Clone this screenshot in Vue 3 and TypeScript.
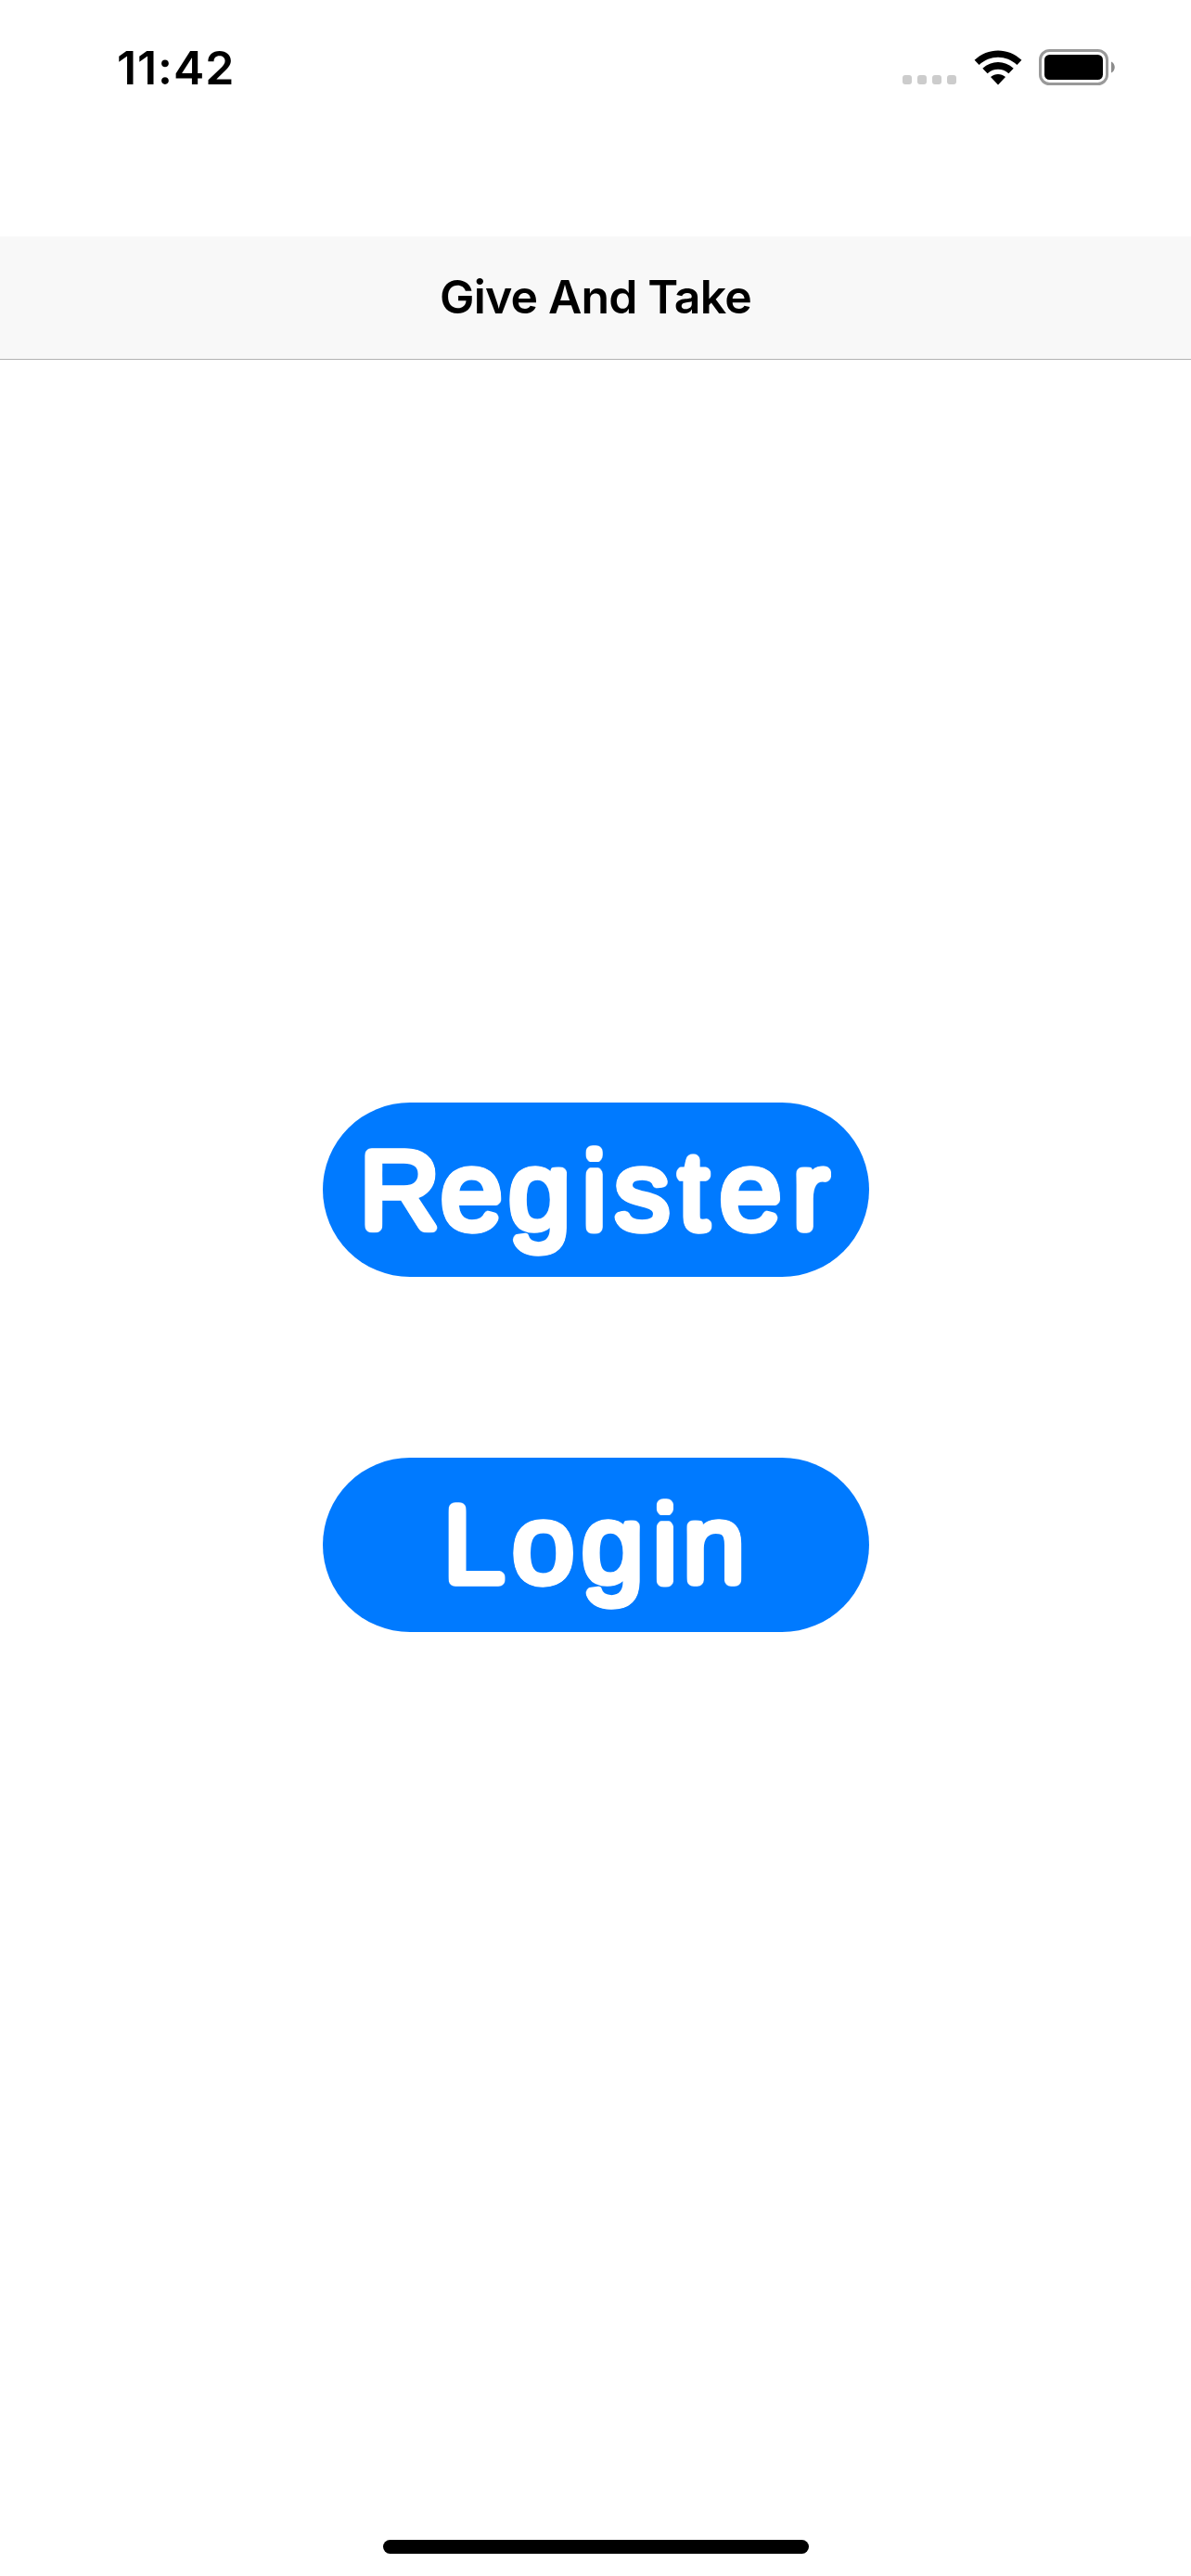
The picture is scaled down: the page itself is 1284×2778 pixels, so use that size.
<script setup lang="ts">
interface Action {
  label: string
  x: number[]
  baseline: number
}

const actions: Action[] = [
  { label: 'Register', x: [39.2, 126.8, 200, 279.3, 314, 383, 427.5, 506], baseline: 137 },
  { label: 'Login', x: [129.5, 204, 278.8, 355.5, 388], baseline: 135 },
]
</script>

<template>
  <main class="screen">
    <header class="status">
      <span class="time">11:42</span>
      <div class="indicators">
        <div class="signal"><i v-for="n in 4" :key="n"></i></div>
        <svg class="wifi" width="52" height="38" viewBox="0 0 52 38">
          <path d="M.6 10.8C15-3.1 37-3.1 51.4 10.8L46.4 16C34.8 5 17.2 5 5.6 16Z" />
          <path d="M9.3 19.8C19 10.7 33 10.7 42.7 19.8L37.4 25.2C31 19.3 21 19.3 14.6 25.2Z" />
          <path d="M18 29C22.6 25.1 29.4 25.1 34 29L26 37.4Z" />
        </svg>
        <svg class="battery" width="83" height="39" viewBox="0 0 83 39">
          <rect x="1.5" y="1.5" width="72" height="36" rx="10" fill="none" stroke="#999" stroke-width="3" />
          <rect x="6" y="6" width="63" height="27" rx="5.5" />
          <path d="M78 13.5C83 15.5 83 23.5 78 25.5Z" fill="#8c8c8c" />
        </svg>
      </div>
    </header>
    <nav class="bar"><h1>Give And Take</h1></nav>
    <section class="actions">
      <button v-for="a in actions" :key="a.label" class="action" type="button">
        <svg width="589" height="188" viewBox="0 0 589 188">
          <!-- rounds the outer corners of the letters and keeps the inner joins sharp -->
          <filter
            :id="`round-${a.label}`"
            filterUnits="userSpaceOnUse"
            x="0"
            y="0"
            width="589"
            height="188"
            color-interpolation-filters="sRGB"
          >
            <feGaussianBlur stdDeviation="4.4" />
            <feComponentTransfer>
              <feFuncA type="linear" slope="10" intercept="-4" />
            </feComponentTransfer>
            <feComposite operator="in" in2="SourceGraphic" />
          </filter>
          <text class="label" :x="a.x.join(' ')" :y="a.baseline" :filter="`url(#round-${a.label})`">{{ a.label }}</text>
        </svg>
      </button>
    </section>
    <footer class="home"><div class="indicator"></div></footer>
  </main>
</template>

<style>
body {
  background: #fff;
}
</style>

<style scoped>
.screen {
  display: flex;
  flex-direction: column;
  width: 1284px;
  height: 2778px;
  background: #fff;
  color: #000;
  font-family: Inter, "Liberation Sans", sans-serif;
}
.status {
  display: flex;
  justify-content: space-between;
  box-sizing: border-box;
  height: 255px;
  padding: 53px 81px 0 126px;
}
.time {
  height: 40px;
  font-size: 50px;
  font-weight: 600;
  line-height: 40px;
  letter-spacing: 0.9px;
}
.indicators {
  display: flex;
  align-items: flex-start;
}
.signal {
  display: flex;
  gap: 6px;
  margin: 28px 19px 0 0;
}
.signal i {
  width: 10px;
  height: 10px;
  border-radius: 3px;
  background: #ccc;
}
.wifi {
  margin: 1px 18px 0 0;
}
.bar {
  display: flex;
  align-items: center;
  justify-content: center;
  box-sizing: border-box;
  height: 133px;
  padding-bottom: 2px;
  border-bottom: 1px solid #b2b2b2;
  background: #f8f8f8;
}
h1 {
  margin: 0;
  font-size: 50px;
  font-weight: 600;
  line-height: 60px;
  letter-spacing: -0.85px;
}
.actions {
  display: flex;
  flex: 1;
  flex-direction: column;
  align-items: center;
  gap: 195px;
  padding-top: 801px;
}
.action {
  display: flex;
  width: 589px;
  height: 188px;
  padding: 0;
  border: 0;
  border-radius: 94px;
  background: #007aff;
}
.label {
  fill: #fff;
  stroke: #fff;
  stroke-width: 7.5px;
  stroke-linejoin: round;
  font-family: "Liberation Sans", Arial, sans-serif;
  font-size: 121px;
}
.home {
  display: flex;
  justify-content: center;
  padding-bottom: 24px;
}
.indicator {
  width: 459px;
  height: 15px;
  border-radius: 8px;
  background: #000;
}
</style>
